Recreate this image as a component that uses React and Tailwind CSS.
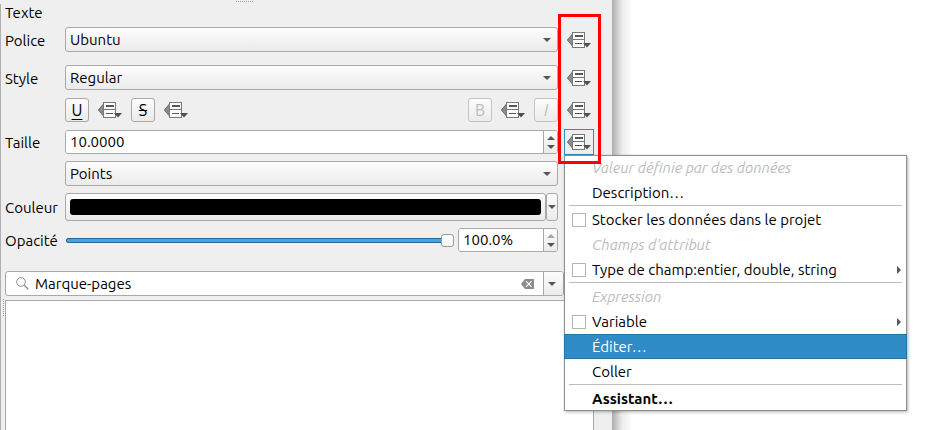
import React from "react";

const FRAME = "rounded-[3px] border border-[#a9a9a9]";
const RAISED = "bg-gradient-to-b from-[#fdfdfd] to-[#ebebeb]";

function Triangle({ direction = "down", color = "#555759" }) {
  const points = {
    down: "0,0 8,0 4,4",
    up: "0,4 8,4 4,0",
  }[direction];
  return (
    <svg width="8" height="4" viewBox="0 0 8 4" className="shrink-0" aria-hidden="true">
      <polygon points={points} fill={color} />
    </svg>
  );
}

function OverrideIcon() {
  return (
    <svg width="24" height="16" viewBox="0 0 24 16" aria-hidden="true">
      <polygon points="0,8 6,1 6,15" fill="#8b8d8f" />
      <path d="M0.5 8L5.5 2M0.5 8L5.5 14" stroke="#6d6f71" fill="none" />
      <rect x="5.5" y="0.5" width="12" height="15" fill="#fcfcfc" stroke="#76787a" />
      <path d="M6 7.5H17" stroke="#76787a" />
      <path d="M8 4H16" stroke="#55575c" strokeWidth="2" />
      <path d="M8 11.5H15" stroke="#55575c" />
      <polygon points="16,11 24,11 20,15.5" fill="#4d4f51" />
    </svg>
  );
}

function OverrideButton({ label, active = false }) {
  return (
    <button
      type="button"
      aria-label={label}
      className={
        active
          ? "flex h-[26px] w-[30px] shrink-0 items-center border border-[#2f8cc6] pl-[2px]"
          : "flex h-[26px] w-[30px] shrink-0 items-center border border-transparent pl-[2px]"
      }
    >
      <OverrideIcon />
    </button>
  );
}

function Combo({ id, value }) {
  return (
    <div className="relative min-w-0 flex-1">
      <select
        id={id}
        defaultValue={value}
        className={`block h-[25px] w-full appearance-none pl-1 ${FRAME} ${RAISED}`}
      >
        <option>{value}</option>
      </select>
      <span className="pointer-events-none absolute inset-y-0 right-[7px] flex items-center">
        <Triangle />
      </span>
    </div>
  );
}

function Spin({ id, label, value, atMax = false, className }) {
  return (
    <div className={`flex h-6 overflow-hidden bg-white ${FRAME} ${className}`}>
      <input
        id={id}
        aria-label={label}
        defaultValue={value}
        className="w-0 min-w-0 flex-1 bg-white pl-1 outline-none"
      />
      <div className={`flex w-[14px] flex-col gap-1 border-l border-[#a9a9a9] py-1 ${RAISED}`}>
        <button type="button" aria-label="Augmenter" className="flex flex-1 items-center justify-center">
          <Triangle direction="up" color={atMax ? "#a8a8a8" : "#555759"} />
        </button>
        <button type="button" aria-label="Diminuer" className="flex flex-1 items-center justify-center">
          <Triangle />
        </button>
      </div>
    </div>
  );
}

function FormatButton({ label, disabled = false, children }) {
  return (
    <button
      type="button"
      aria-label={label}
      disabled={disabled}
      className={`flex size-6 shrink-0 items-center justify-center text-base disabled:border-[#c4c4c4] disabled:text-[#bdbdbd] ${FRAME} ${RAISED}`}
    >
      {children}
    </button>
  );
}

function Row({ label, htmlFor, children }) {
  return (
    <div className="flex min-h-[26px]">
      <label htmlFor={htmlFor} className="flex w-[60px] shrink-0 items-center pt-0.5">
        {label}
      </label>
      {children}
    </div>
  );
}

function MenuTitle({ children }) {
  return <div className="flex h-[25px] items-center pl-7 text-[#bcbcbc] italic">{children}</div>;
}

function MenuAction({ children, bold = false, highlighted = false }) {
  return (
    <button
      type="button"
      role="menuitem"
      className={
        highlighted
          ? "flex h-[25px] w-full items-center border border-[#2574a8] bg-[#308cc6] pl-[27px] text-white"
          : `flex h-[25px] w-full items-center pl-7 ${bold ? "font-bold" : ""}`
      }
    >
      {children}
    </button>
  );
}

function MenuCheck({ children, submenu = false }) {
  return (
    <label className="flex h-[25px] items-center pr-[6px] pl-2">
      <input type="checkbox" className="mr-1.5 size-[14px] appearance-none border border-[#b4b4b4] bg-white" />
      <span className="flex-1">{children}</span>
      {submenu && (
        <svg width="4" height="8" viewBox="0 0 4 8" aria-hidden="true">
          <polygon points="0,0 4,4 0,8" fill="#555759" />
        </svg>
      )}
    </label>
  );
}

function MenuRule() {
  return <div role="separator" className="mx-[5px] h-0.5 border-t border-[#bdbdbd]" />;
}

function OverrideMenu() {
  return (
    <div
      role="menu"
      className="absolute top-full left-0 z-10 w-[343px] bg-white shadow-[1px_1px_3px_rgba(0,0,0,0.3)]"
    >
      <div className="pointer-events-none absolute inset-0 border border-[#8f8f8f]" />
      <div className="relative">
        <MenuTitle>Valeur définie par des données</MenuTitle>
        <MenuAction>Description…</MenuAction>
        <MenuRule />
        <MenuCheck>Stocker les données dans le projet</MenuCheck>
        <MenuTitle>Champs d'attribut</MenuTitle>
        <MenuCheck submenu>Type de champ:entier, double, string</MenuCheck>
        <MenuRule />
        <MenuTitle>Expression</MenuTitle>
        <MenuCheck submenu>Variable</MenuCheck>
        <MenuAction highlighted>Éditer…</MenuAction>
        <MenuAction>Coller</MenuAction>
        <MenuRule />
        <MenuAction bold>Assistant…</MenuAction>
      </div>
    </div>
  );
}

function Field({ override, children }) {
  return (
    <div className="flex min-w-0 flex-1 gap-1.5">
      {children}
      {override || <span className="w-[30px] shrink-0" />}
    </div>
  );
}

export default function App() {
  return (
    <div className="flex h-screen overflow-hidden bg-white font-['Ubuntu','Noto_Sans',sans-serif] text-[15px] leading-5 text-black">
      <main className="relative flex min-w-0 flex-1 flex-col bg-[#efefef] pr-[18px] pl-[5px]">
        <div className="absolute top-1 bottom-0 left-0 w-px bg-[#b0b0b0]" />
        <div className="absolute top-px left-[236px] w-[17px] border-t border-dotted border-[#a0a0a0]" />
        <div className="absolute top-[299px] left-[3px] h-[17px] border-l border-dotted border-[#a0a0a0]" />
        <div className="pointer-events-none absolute top-[14px] right-[11px] z-20 h-[150px] w-[43px] border-3 border-[#ff0000]" />

        <h1 className="h-[27px] pt-[3px]">Texte</h1>

        <form className="flex flex-col gap-1.5">
          <div className="flex flex-col gap-3">
            <Row label="Police" htmlFor="police">
              <Field override={<OverrideButton label="Définir la police par des données" />}>
                <Combo id="police" value="Ubuntu" />
              </Field>
            </Row>
            <Row label="Style" htmlFor="style">
              <Field override={<OverrideButton label="Définir le style par des données" />}>
                <Combo id="style" value="Regular" />
              </Field>
            </Row>
          </div>

          <div className="flex h-[26px] items-center gap-1.5 pl-[60px]">
            <FormatButton label="Souligné">
              <span className="underline decoration-1 underline-offset-3">U</span>
            </FormatButton>
            <OverrideButton label="Définir le souligné par des données" />
            <FormatButton label="Barré">
              <span className="line-through">S</span>
            </FormatButton>
            <OverrideButton label="Définir le barré par des données" />
            <span className="flex-1" />
            <FormatButton label="Gras" disabled>
              B
            </FormatButton>
            <OverrideButton label="Définir le gras par des données" />
            <FormatButton label="Italique" disabled>
              <span className="italic">I</span>
            </FormatButton>
            <OverrideButton label="Définir l'italique par des données" />
          </div>

          <Row label="Taille" htmlFor="taille">
            <Field
              override={
                <div className="relative">
                  <OverrideButton label="Définir la taille par des données" active />
                  <OverrideMenu />
                </div>
              }
            >
              <Spin id="taille" value="10.0000" className="min-w-0 flex-1 self-center" />
            </Field>
          </Row>

          <Row label="" htmlFor="unite">
            <Field>
              <Combo id="unite" value="Points" />
            </Field>
          </Row>

          <Row label="Couleur" htmlFor="couleur">
            <Field>
              <div className="flex h-7 min-w-0 flex-1">
                <button
                  id="couleur"
                  type="button"
                  aria-label="Couleur"
                  className={`flex min-w-0 flex-1 items-center px-1 ${FRAME} ${RAISED}`}
                >
                  <span className="h-4 w-full rounded-[3px] bg-black" />
                </button>
                <button
                  type="button"
                  aria-label="Options de couleur"
                  className={`flex w-3 items-center justify-center ${FRAME} ${RAISED}`}
                >
                  <Triangle />
                </button>
              </div>
            </Field>
          </Row>

          <Row label="Opacité" htmlFor="opacite">
            <Field>
              <div className="flex min-w-0 flex-1 items-center gap-1">
                <input
                  id="opacite"
                  type="range"
                  defaultValue="100"
                  className="ml-px h-[14px] min-w-0 flex-1 appearance-none bg-transparent [&::-webkit-slider-runnable-track]:h-[5px] [&::-webkit-slider-runnable-track]:rounded-[2px] [&::-webkit-slider-runnable-track]:border [&::-webkit-slider-runnable-track]:border-[#22689a] [&::-webkit-slider-runnable-track]:bg-[#43a4e6] [&::-webkit-slider-thumb]:relative [&::-webkit-slider-thumb]:left-px [&::-webkit-slider-thumb]:-mt-[5px] [&::-webkit-slider-thumb]:size-[13px] [&::-webkit-slider-thumb]:appearance-none [&::-webkit-slider-thumb]:rounded-[3px] [&::-webkit-slider-thumb]:border [&::-webkit-slider-thumb]:border-[#999999] [&::-webkit-slider-thumb]:bg-[#fafafa]"
                />
                <Spin id="opacite-valeur" label="Opacité" value="100.0%" atMax className="w-[100px]" />
              </div>
            </Field>
          </Row>
        </form>

        <div className={`mt-[18px] mr-[30px] flex h-[25px] shrink-0 overflow-hidden bg-white ${FRAME}`}>
          <span className="flex items-center pr-1.5 pl-[10px]">
            <svg width="13" height="13" viewBox="0 0 13 13" fill="none" stroke="#8c8c8c" aria-hidden="true">
              <circle cx="5" cy="5" r="4.3" />
              <path d="M8.2 8.2L12.3 12.3" strokeWidth="1.3" />
            </svg>
          </span>
          <input
            aria-label="Marque-pages"
            defaultValue="Marque-pages"
            className="min-w-0 flex-1 bg-white outline-none"
          />
          <button type="button" aria-label="Effacer" className="flex items-center pr-[9px]">
            <svg width="13" height="10" viewBox="0 0 13 10" aria-hidden="true">
              <polygon points="0,5 4,0 13,0 13,10 4,10" fill="#8b8d8f" />
              <path d="M5 2.2L10.5 7.8M10.5 2.2L5 7.8" stroke="#ffffff" strokeWidth="1.1" />
            </svg>
          </button>
          <button
            type="button"
            aria-label="Choisir un groupe"
            className={`flex w-5 items-center justify-center border-l border-[#a9a9a9] pr-[3px] ${RAISED}`}
          >
            <Triangle />
          </button>
        </div>

        <div className="mt-1 flex-1 border border-b-0 border-[#a9a9a9] bg-white" />
      </main>

      <aside className="w-[317px] shrink-0">
        <div className="h-full w-5 bg-gradient-to-r from-[#adadad] via-[#ececec] via-50% to-white" />
      </aside>
    </div>
  );
}
